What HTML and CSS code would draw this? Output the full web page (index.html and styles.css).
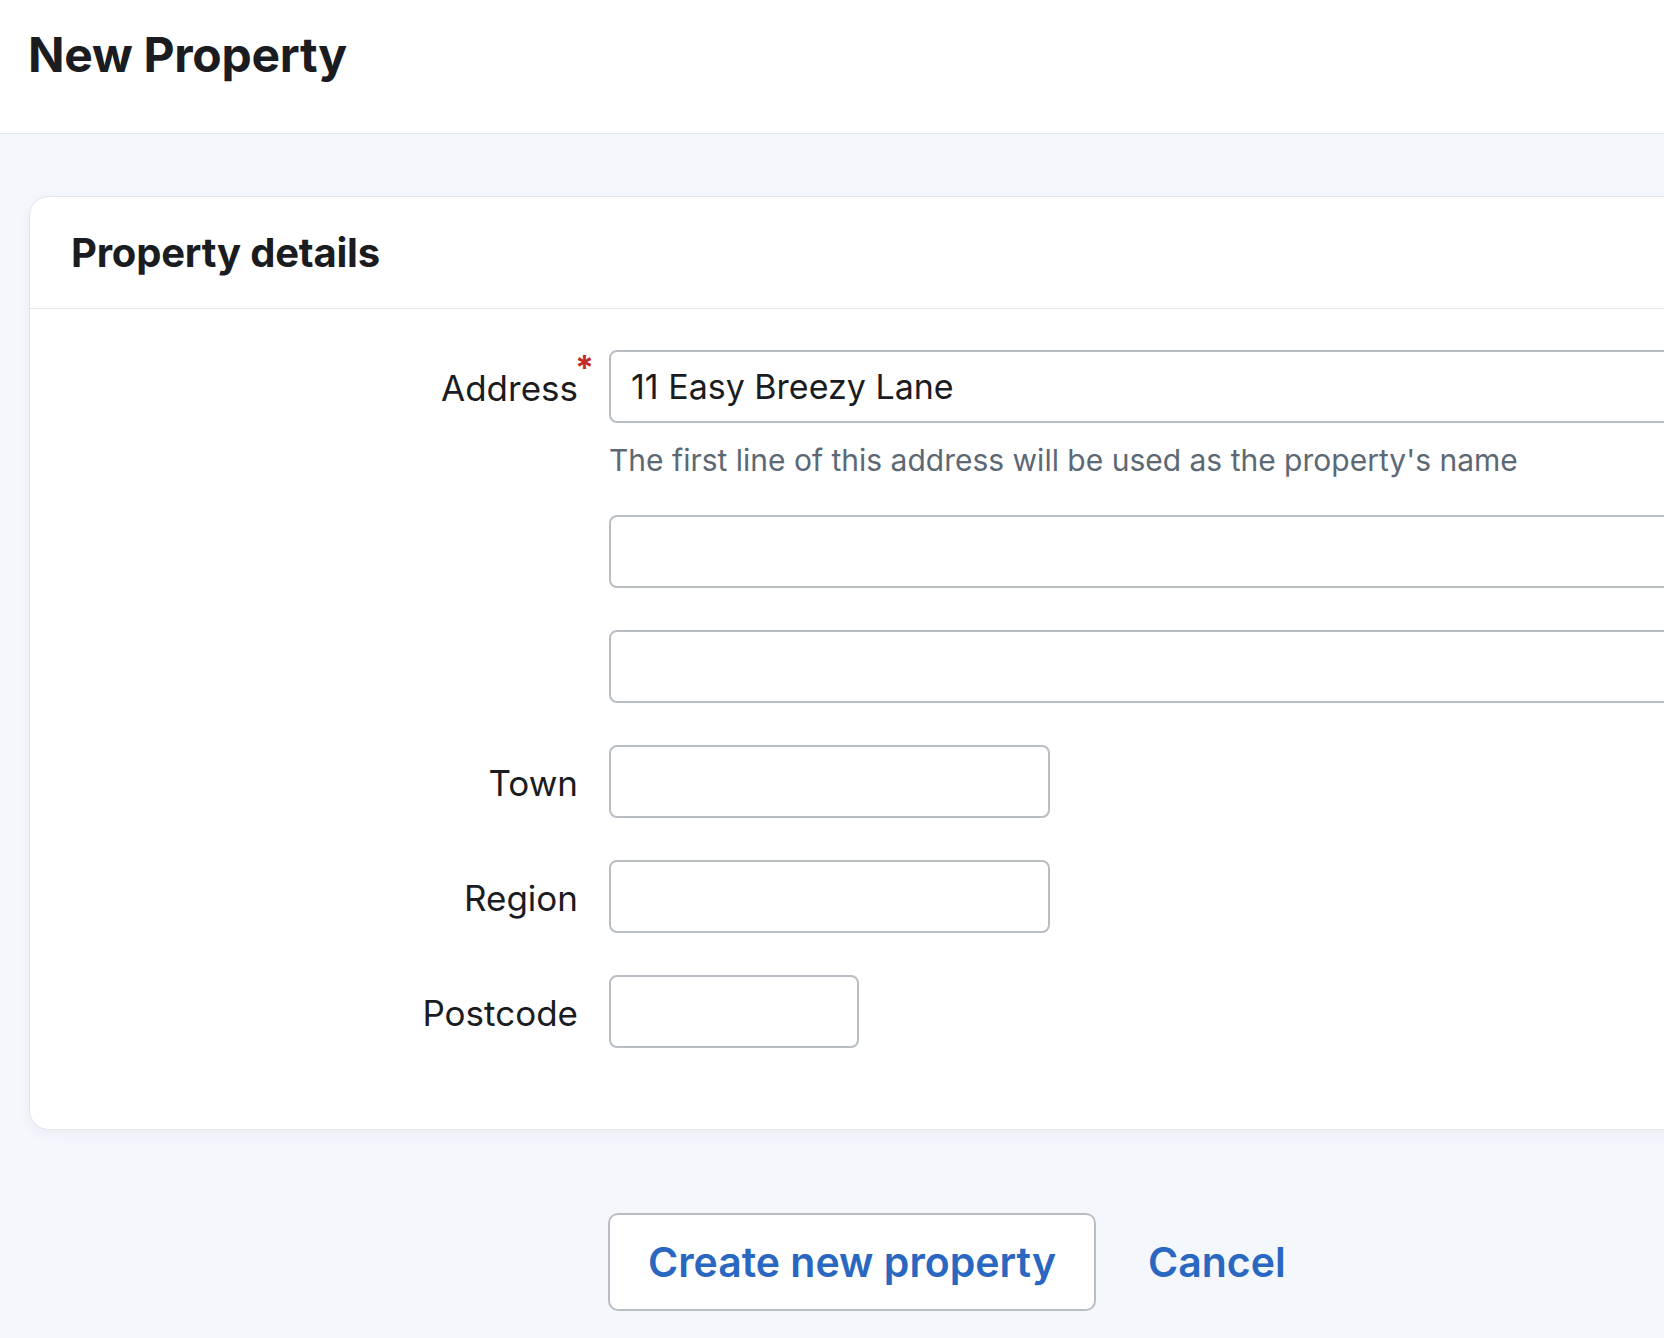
FILE: index.html
```html
<!DOCTYPE html>
<html lang="en">
<head>
<meta charset="utf-8">
<title>New Property</title>
<link rel="stylesheet" href="styles.css">
</head>
<body>
<header class="page-header">
  <h1 class="page-title">New Property</h1>
</header>
<main class="page-body">
  <section class="card">
    <div class="card-header">
      <h2 class="card-title">Property details</h2>
    </div>
    <div class="card-body">
      <div class="form-row">
        <label class="field-label required" for="addr1">Address</label>
        <div class="field">
          <input class="text-input full" id="addr1" type="text" value="11 Easy Breezy Lane">
          <p class="help-text">The first line of this address will be used as the property's name</p>
        </div>
      </div>
      <div class="form-row">
        <span class="field-label"></span>
        <div class="field"><input class="text-input full" type="text"></div>
      </div>
      <div class="form-row">
        <span class="field-label"></span>
        <div class="field"><input class="text-input full" type="text"></div>
      </div>
      <div class="form-row">
        <label class="field-label" for="town">Town</label>
        <div class="field"><input class="text-input medium" id="town" type="text"></div>
      </div>
      <div class="form-row">
        <label class="field-label" for="region">Region</label>
        <div class="field"><input class="text-input medium" id="region" type="text"></div>
      </div>
      <div class="form-row">
        <label class="field-label" for="postcode">Postcode</label>
        <div class="field"><input class="text-input small" id="postcode" type="text"></div>
      </div>
    </div>
  </section>
  <div class="actions">
    <button class="btn" type="button">Create new property</button>
    <a class="link-btn" href="#">Cancel</a>
  </div>
</main>
</body>
</html>
```

FILE: styles.css
```css
* { box-sizing: border-box; }

html, body {
  margin: 0;
  padding: 0;
}

body {
  font-family: "Inter", "Liberation Sans", sans-serif;
  color: #1b1c1f;
  background: #f4f7fc;
  overflow: hidden;
  width: 1664px;
  height: 1338px;
}

.page-header {
  height: 134px;
  background: #ffffff;
  border-bottom: 1px solid #e2e5ea;
  padding-left: 28px;
  display: flex;
  align-items: center;
}

.page-title {
  margin: 0;
  font-size: 48px;
  font-weight: 700;
  letter-spacing: -0.3px;
  line-height: 1;
  padding-bottom: 24px;
}

.page-body {
  padding: 62px 0 0 29px;
}

.card {
  width: 1900px;
  background: #ffffff;
  border: 1px solid #e2e5ea;
  border-radius: 20px;
  box-shadow: 0 4px 14px rgba(40, 60, 110, 0.05);
}

.card-header {
  height: 112px;
  border-bottom: 1px solid #e2e5ea;
  padding-left: 41px;
  display: flex;
  align-items: center;
}

.card-title {
  margin: 0;
  font-size: 40px;
  font-weight: 700;
  letter-spacing: -0.2px;
  line-height: 1;
}

.card-body {
  padding: 41px 0 81px 0;
  display: flex;
  flex-direction: column;
  gap: 42px;
}

.form-row {
  display: grid;
  grid-template-columns: 548px 1fr;
  column-gap: 31px;
  align-items: start;
}

.field-label {
  position: relative;
  justify-self: end;
  font-size: 35px;
  line-height: 76px;
  height: 72px;
  color: #1b1c1f;
}

.field-label.required::after {
  content: "*";
  position: absolute;
  right: -16px;
  top: -20px;
  font-size: 34px;
  font-weight: 700;
  color: #c42b2b;
}

.field {
  display: flex;
  flex-direction: column;
}

.text-input {
  height: 73px;
  border: 2px solid #b9bec5;
  border-radius: 8px;
  background: #ffffff;
  padding: 0 20px;
  font-family: inherit;
  font-size: 34px;
  color: #1b1c1f;
  outline: none;
}

.text-input.full { width: 1300px; }
.text-input.medium { width: 441px; }
.text-input.small { width: 250px; }

.help-text {
  margin: 24px 0 0 0;
  font-size: 30px;
  line-height: 26px;
  color: #5c6874;
}

.actions {
  margin-top: 83px;
  padding-left: 579px;
  display: flex;
  align-items: center;
  gap: 52px;
}

.btn {
  height: 98px;
  width: 488px;
  background: #ffffff;
  border: 2px solid #b9bec5;
  border-radius: 10px;
  font-family: inherit;
  font-size: 41px;
  font-weight: 600;
  color: #2a67c0;
  padding: 0;
}

.link-btn {
  font-size: 41px;
  font-weight: 600;
  color: #2a67c0;
  text-decoration: none;
}
```
